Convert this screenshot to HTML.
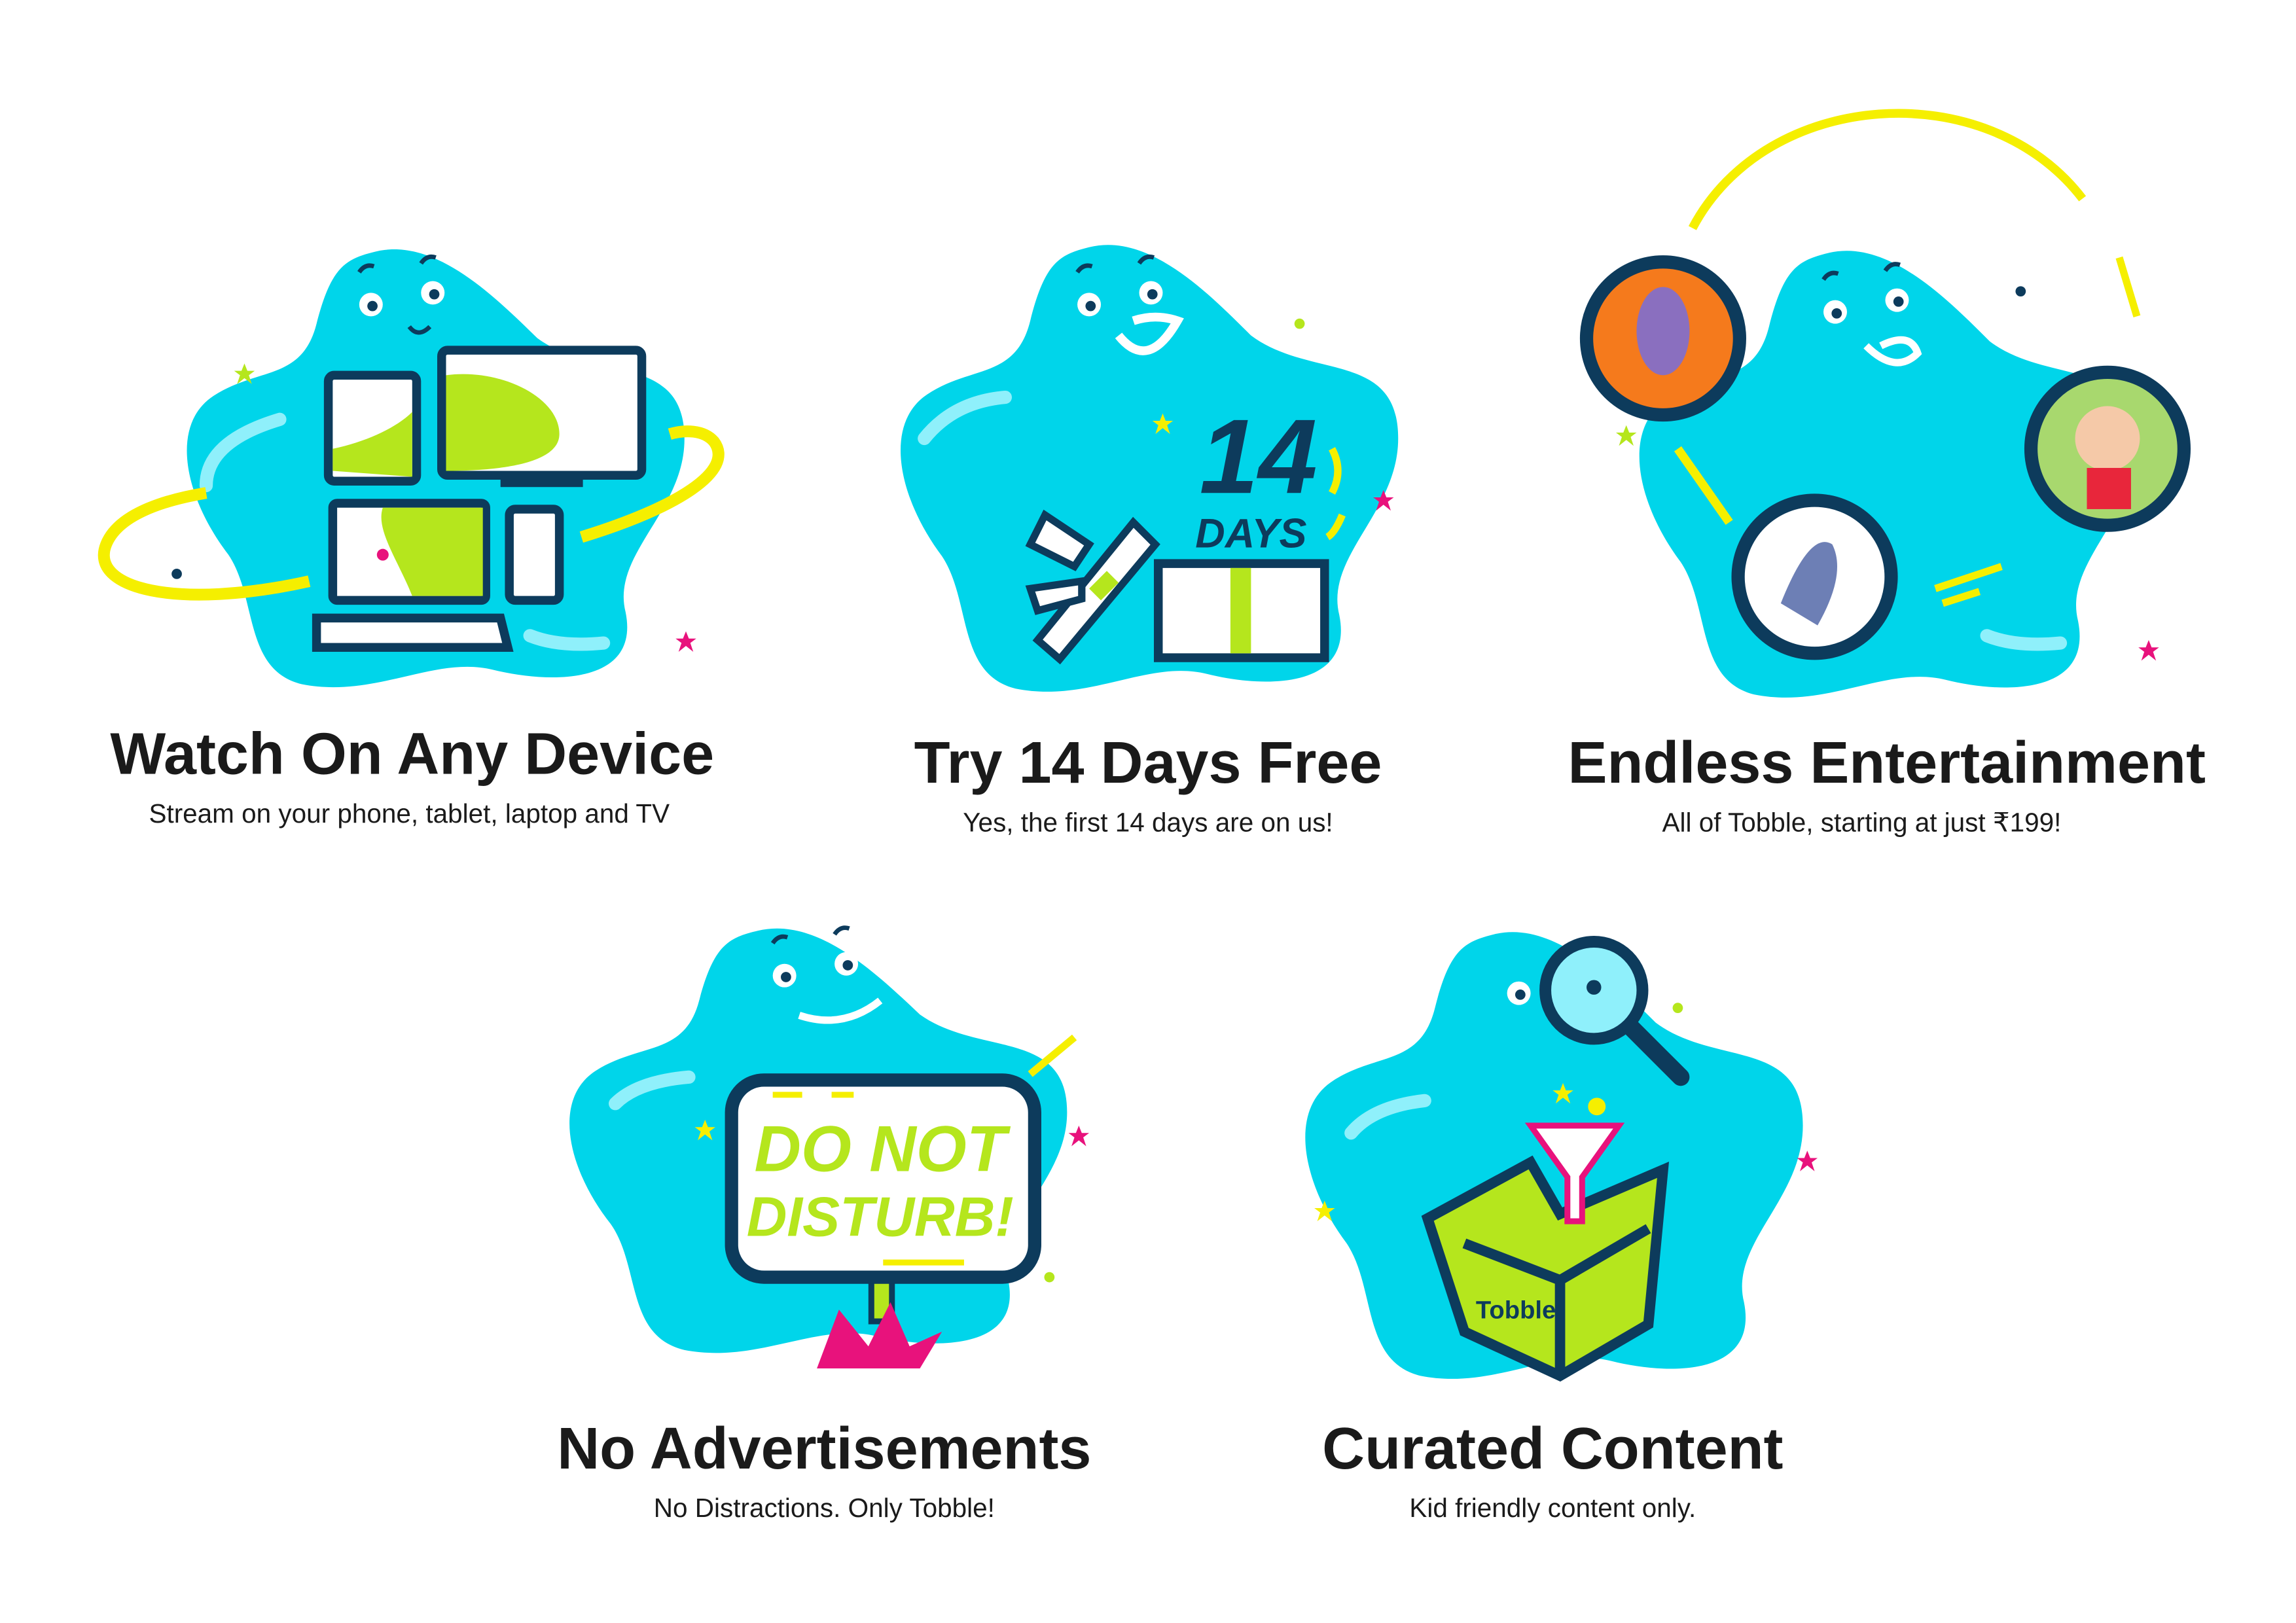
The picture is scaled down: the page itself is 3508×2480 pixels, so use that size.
<!DOCTYPE html>
<html><head><meta charset="utf-8"><style>
html,body{margin:0;padding:0;background:#fff;width:3508px;height:2480px;overflow:hidden}
svg{display:block}
.t{font-family:"Liberation Sans",sans-serif;font-weight:bold;fill:#1a1a1a;text-anchor:middle}
.s{font-family:"Liberation Sans",sans-serif;fill:#1a1a1a;text-anchor:middle;font-size:18px}
</style></head><body>
<svg width="3508" height="2480" viewBox="0 0 1560 1103" xmlns="http://www.w3.org/2000/svg">
<defs>
<path id="b" d="M -40,-150 C 0,-160 40,-120 70,-90 C 110,-60 170,-80 170,-20 C 170,30 120,60 130,100 C 140,150 80,150 40,140 C 0,130 -40,160 -90,150 C -130,140 -120,90 -140,60 C -170,20 -180,-30 -150,-50 C -120,-70 -90,-60 -80,-100 C -70,-140 -60,-145 -40,-150 Z" fill="#00d5ea"/>
<g id="f"><circle cx="0" cy="0" r="8" fill="#fff"/><circle cx="1" cy="1" r="3.5" fill="#0d3b5c"/><circle cx="42" cy="-8" r="8" fill="#fff"/><circle cx="43" cy="-7" r="3.5" fill="#0d3b5c"/><path d="M-8,-22 q4,-6 10,-4 M34,-28 q4,-6 10,-4" stroke="#0d3b5c" stroke-width="3" fill="none"/></g>
<path id="st" d="M0,-7 L2,-2 7,-2 3,1 5,7 0,3 -5,7 -3,1 -7,-2 -2,-2Z"/>
</defs>

<!-- 1 -->
<use href="#b" transform="translate(295,318) scale(1.0,0.98)"/>
<use href="#f" transform="translate(252,207)"/>
<path d="M278,222 q6,8 14,0" stroke="#0d3b5c" stroke-width="3" fill="none"/>
<path d="M140,330 q0,-30 50,-45" stroke="#8ff0fb" stroke-width="9" fill="none" stroke-linecap="round"/>
<path d="M360,432 q20,8 50,5" stroke="#8ff0fb" stroke-width="9" fill="none" stroke-linecap="round"/>
<path d="M210,395 C120,415 60,400 72,370 C80,350 110,340 140,335" stroke="#f5ef00" stroke-width="8" fill="none"/>
<path d="M395,365 C460,345 500,320 485,300 C478,292 465,292 455,295" stroke="#f5ef00" stroke-width="8" fill="none"/>
<rect x="300" y="238" width="136" height="85" rx="4" fill="#fff" stroke="#0d3b5c" stroke-width="6"/>
<path d="M303,255 C340,250 380,270 380,295 C380,315 340,320 303,320Z" fill="#b5e61d"/>
<rect x="340" y="325" width="56" height="6" fill="#0d3b5c"/>
<rect x="223" y="255" width="60" height="72" rx="4" fill="#fff" stroke="#0d3b5c" stroke-width="6"/>
<path d="M226,320 L226,305 C250,300 270,290 280,280 L280,324Z" fill="#b5e61d"/>
<rect x="226" y="342" width="104" height="66" rx="3" fill="#fff" stroke="#0d3b5c" stroke-width="6"/>
<path d="M260,345 L328,345 L328,405 L280,405 C270,380 255,360 260,345Z" fill="#b5e61d"/>
<path d="M215,420 L340,420 L345,440 L215,440Z" fill="#fff" stroke="#0d3b5c" stroke-width="6"/>
<rect x="346" y="346" width="34" height="62" rx="4" fill="#fff" stroke="#0d3b5c" stroke-width="6"/>
<circle cx="260" cy="377" r="4" fill="#e8127c"/>
<use href="#st" fill="#e8127c" transform="translate(466,436)"/>
<use href="#st" fill="#b5e61d" transform="translate(166,254)"/>
<circle cx="120" cy="390" r="3.5" fill="#0d3b5c"/>
<text class="t" x="280" y="526" font-size="40">Watch On Any Device</text>
<text class="s" x="278" y="559">Stream on your phone, tablet, laptop and TV</text>

<!-- 2 -->
<use href="#b" transform="translate(780,318)"/>
<use href="#f" transform="translate(740,207)"/>
<path d="M760,228 q20,25 40,-10 q-15,-5 -30,0" stroke="#fff" stroke-width="6" fill="none"/>
<path d="M628,298 q20,-25 55,-28" stroke="#8ff0fb" stroke-width="9" fill="none" stroke-linecap="round"/>
<text x="855" y="335" font-family="Liberation Sans" font-weight="bold" font-style="italic" font-size="72" fill="#0d3b5c" text-anchor="middle">14</text>
<text x="850" y="372" font-family="Liberation Sans" font-weight="bold" font-style="italic" font-size="28" fill="#0d3b5c" text-anchor="middle">DAYS</text>
<rect x="787" y="383" width="113" height="64" fill="#fff" stroke="#0d3b5c" stroke-width="6"/>
<rect x="836" y="386" width="14" height="58" fill="#b5e61d"/>
<path d="M705,435 L770,355 L785,370 L720,448Z" fill="#fff" stroke="#0d3b5c" stroke-width="5"/>
<path d="M740,400 l12,-12 8,8 -12,12z" fill="#b5e61d"/>
<path d="M740,370 l-30,-20 -10,20 30,15z M735,395 l-35,5 5,15 30,-8z" fill="#fff" stroke="#0d3b5c" stroke-width="5"/>
<use href="#st" fill="#e8127c" transform="translate(940,340)"/>
<use href="#st" fill="#f5ef00" transform="translate(790,288)"/>
<path d="M905,305 q8,15 0,30 M912,350 q-5,12 -10,15" stroke="#f5ef00" stroke-width="5" fill="none"/>
<circle cx="883" cy="220" r="3.5" fill="#b5e61d"/>
<text class="t" x="780" y="532" font-size="40">Try 14 Days Free</text>
<text class="s" x="780" y="565">Yes, the first 14 days are on us!</text>

<!-- 3 -->
<use href="#b" transform="translate(1282,322)"/>
<use href="#f" transform="translate(1247,212)"/>
<path d="M1268,235 q20,20 35,5 q-5,-15 -25,-5" stroke="#fff" stroke-width="5" fill="none"/>
<path d="M1150,155 C1200,60 1350,50 1415,135" stroke="#f5ef00" stroke-width="6" fill="none"/>
<path d="M1440,175 L1452,215" stroke="#f5ef00" stroke-width="5"/>
<path d="M1140,305 L1175,355" stroke="#f5ef00" stroke-width="6"/>
<path d="M1315,400 L1360,385 M1320,410 L1345,402" stroke="#f5ef00" stroke-width="5"/>
<path d="M1350,432 q20,8 50,5" stroke="#8ff0fb" stroke-width="9" fill="none" stroke-linecap="round"/>
<circle cx="1130" cy="230" r="52" fill="#f57a1c" stroke="#0d3b5c" stroke-width="9"/>
<ellipse cx="1130" cy="225" rx="18" ry="30" fill="#8a6fbf"/>
<circle cx="1432" cy="305" r="52" fill="#a8d86e" stroke="#0d3b5c" stroke-width="9"/>
<circle cx="1432" cy="298" r="22" fill="#f5c9a8"/><rect x="1418" y="318" width="30" height="28" fill="#e8263b"/>
<circle cx="1233" cy="392" r="52" fill="#ffffff" stroke="#0d3b5c" stroke-width="9"/>
<path d="M1210,410 q20,-50 35,-40 q10,20 -10,55z" fill="#6d7fb5"/>
<circle cx="1373" cy="198" r="3.5" fill="#0d3b5c"/>
<use href="#st" fill="#e8127c" transform="translate(1460,442)"/>
<use href="#st" fill="#b5e61d" transform="translate(1105,296)"/>
<text class="t" x="1282" y="532" font-size="40">Endless Entertainment</text>
<text class="s" x="1265" y="565">All of Tobble, starting at just ₹199!</text>

<!-- 4 -->
<use href="#b" transform="translate(555,775) scale(1.0,0.95)"/>
<use href="#f" transform="translate(533,663)"/>
<path d="M543,690 q30,10 55,-10" stroke="#fff" stroke-width="5" fill="none"/>
<path d="M418,750 q15,-15 50,-18" stroke="#8ff0fb" stroke-width="9" fill="none" stroke-linecap="round"/>
<rect x="592" y="868" width="14" height="30" fill="#b5e61d" stroke="#0d3b5c" stroke-width="4"/>
<rect x="497" y="734" width="206" height="134" rx="22" fill="#fff" stroke="#0d3b5c" stroke-width="9"/>
<text x="598" y="796" font-family="Liberation Sans" font-weight="bold" font-style="italic" font-size="44" fill="#b5e61d" text-anchor="middle">DO NOT</text>
<text x="598" y="840" font-family="Liberation Sans" font-weight="bold" font-style="italic" font-size="38" fill="#b5e61d" text-anchor="middle">DISTURB!</text>
<path d="M525,744 h20 M565,744 h15 M600,858 h55" stroke="#f5ef00" stroke-width="4"/>
<path d="M555,930 L570,890 L590,915 L605,885 L618,915 L640,905 L625,930Z" fill="#e8127c"/>
<path d="M700,730 l30,-25" stroke="#f5ef00" stroke-width="5"/>
<use href="#st" fill="#e8127c" transform="translate(733,772)"/>
<use href="#st" fill="#f5ef00" transform="translate(479,768)"/>
<circle cx="713" cy="868" r="3.5" fill="#b5e61d"/>
<text class="t" x="560" y="998" font-size="40">No Advertisements</text>
<text class="s" x="560" y="1031">No Distractions. Only Tobble!</text>

<!-- 5 -->
<use href="#b" transform="translate(1055,785) scale(1.0,1.0)"/>
<circle cx="1032" cy="675" r="8" fill="#fff"/><circle cx="1033" cy="676" r="3.5" fill="#0d3b5c"/>
<path d="M918,770 q15,-18 50,-22" stroke="#8ff0fb" stroke-width="9" fill="none" stroke-linecap="round"/>
<circle cx="1083" cy="673" r="33" fill="#8ff0fb" stroke="#0d3b5c" stroke-width="8"/>
<circle cx="1083" cy="671" r="5" fill="#0d3b5c"/>
<path d="M1108,698 L1142,732" stroke="#0d3b5c" stroke-width="12" stroke-linecap="round"/>
<path d="M970,828 L1040,790 L1060,825 L1130,795 L1120,900 L1060,935 L995,905Z" fill="#b5e61d" stroke="#0d3b5c" stroke-width="7"/>
<path d="M995,845 L1060,870 L1120,835 M1060,870 L1060,935" stroke="#0d3b5c" stroke-width="7" fill="none"/>
<text x="1030" y="896" font-family="Liberation Sans" font-weight="bold" font-size="17" fill="#0d3b5c" text-anchor="middle">Tobble</text>
<path d="M1040,765 L1100,765 L1075,800 L1075,830 L1065,830 L1065,800Z" fill="#fff" stroke="#e8127c" stroke-width="4"/>
<use href="#st" fill="#f5ef00" transform="translate(1062,743)"/>
<circle cx="1085" cy="752" r="6" fill="#f5ef00"/>
<use href="#st" fill="#e8127c" transform="translate(1228,789)"/>
<use href="#st" fill="#f5ef00" transform="translate(900,823)"/>
<circle cx="1140" cy="685" r="3.5" fill="#b5e61d"/>
<text class="t" x="1055" y="998" font-size="40">Curated Content</text>
<text class="s" x="1055" y="1031">Kid friendly content only.</text>
</svg>
</body></html>
